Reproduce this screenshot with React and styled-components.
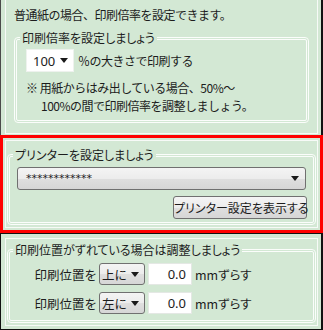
import React from "react";
import styled, { createGlobalStyle } from "styled-components";

const GlobalStyle = createGlobalStyle`
  html, body {
    margin: 0;
    padding: 0;
    background: #ffffff;
  }
`;

const green = "#d3e8d4";

const Arrow = () => (
  <svg width="8" height="5" viewBox="0 0 8 5">
    <polygon points="0,0 8,0 4,5" fill="#1a1a1a" />
  </svg>
);

const App = () => {
  return (
    <>
      <GlobalStyle />
      <StyledWindow>
        {/* Print scale */}
        <StyledTopSection>
          <StyledInner $pad="6px 8px 0 8px" $noTop>
            <StyledLine>普通紙の場合、印刷倍率を設定できます。</StyledLine>
            <StyledGroup $top="6px">
              <StyledLegend>印刷倍率を設定しましょう</StyledLegend>
              <StyledGroupBody $pad="3px 0 5px 9px">
                <StyledRow>
                  <StyledSelect $variant="flat" $width={48}>
                    <span>100</span>
                    <Arrow />
                  </StyledSelect>
                  <StyledText>％の大きさで印刷する</StyledText>
                </StyledRow>
                <StyledNote>
                  ※ 用紙からはみ出している場合、50%～
                  <br />
                  100%の間で印刷倍率を調整しましょう。
                </StyledNote>
              </StyledGroupBody>
            </StyledGroup>
          </StyledInner>
        </StyledTopSection>

        {/* Printer */}
        <StyledMidSection>
          <StyledInner $pad="6px 1px 0 1px">
            <StyledGroup>
              <StyledLegend>プリンターを設定しましょう</StyledLegend>
              <StyledGroupBody $pad="4px 6px 3px 7px">
                <StyledSelect $variant="raised" $width={289}>
                  <StyledMask>************</StyledMask>
                  <Arrow />
                </StyledSelect>
                <StyledButton>プリンター設定を表示する</StyledButton>
              </StyledGroupBody>
            </StyledGroup>
          </StyledInner>
        </StyledMidSection>

        {/* Offset */}
        <StyledBottomSection>
          <StyledInner $pad="3px 1px 0 1px">
            <StyledGroup>
              <StyledLegend>印刷位置がずれている場合は調整しましょう</StyledLegend>
              <StyledGroupBody $pad="5px 0 6px 0" $gap="7px">
                {["上に", "左に"].map((dir) => (
                  <StyledRow key={dir}>
                    <StyledLabel>印刷位置を</StyledLabel>
                    <StyledSelect $variant="raised" $width={46} $small>
                      <span>{dir}</span>
                      <Arrow />
                    </StyledSelect>
                    <StyledInput>0.0</StyledInput>
                    <StyledUnit>mmずらす</StyledUnit>
                  </StyledRow>
                ))}
              </StyledGroupBody>
            </StyledGroup>
          </StyledInner>
        </StyledBottomSection>
      </StyledWindow>
    </>
  );
};

export default App;

const StyledWindow = styled.div`
  width: 323px;
  height: 330px;
  display: flex;
  flex-direction: column;
  font-family: "Noto Sans CJK JP", "Noto Sans", sans-serif;
  font-size: 12px;
  color: #1c1c1c;
  background: ${green};
  white-space: nowrap;
`;

const StyledTopSection = styled.div`
  height: 135px;
  box-sizing: border-box;
  background: ${green};
  border-left: 1px solid #4a4a4a;
  border-right: 2px solid #111;
  padding: 0 3px 1px 4px;
`;

const StyledMidSection = styled.div`
  height: 98px;
  box-sizing: border-box;
  background: ${green};
  border: 3px solid #ff0000;
  padding: 2px;
`;

const StyledBottomSection = styled.div`
  height: 97px;
  box-sizing: border-box;
  background: ${green};
  border: 1px solid #111;
  border-right-width: 2px;
  padding: 4px 3px 3px 4px;
`;

const StyledInner = styled.div`
  height: 100%;
  box-sizing: border-box;
  border: 1px solid #f7faf7;
  border-top: ${({ $noTop }) => ($noTop ? "none" : "1px solid #f7faf7")};
  padding: ${({ $pad }) => $pad};
  display: flex;
  flex-direction: column;
`;

const StyledLine = styled.div`
  line-height: 18px;
  letter-spacing: -0.5px;
`;

const StyledGroup = styled.fieldset`
  margin: ${({ $top }) => $top || "0"} 0 0 0;
  padding: 0;
  min-width: 0;
  border: 3px double #fbfdfb;
  border-radius: 4px;
`;

const StyledLegend = styled.legend`
  margin-left: 3px;
  padding: 0 2px;
  line-height: 16px;
  font-feature-settings: "palt";
`;

const StyledGroupBody = styled.div`
  display: flex;
  flex-direction: column;
  gap: ${({ $gap }) => $gap || "0"};
  padding: ${({ $pad }) => $pad};
`;

const StyledRow = styled.div`
  display: flex;
  align-items: center;
`;

const StyledText = styled.span`
  letter-spacing: -0.5px;
`;

const StyledSelect = styled.div`
  width: ${({ $width }) => $width}px;
  height: ${({ $small }) => ($small ? 22 : 23)}px;
  box-sizing: border-box;
  display: flex;
  align-items: center;
  justify-content: space-between;
  margin-right: ${({ $variant }) => ($variant === "flat" ? "4px" : "0")};
  padding: ${({ $variant, $small }) =>
    $variant === "flat" ? "0 5px 0 6px" : $small ? "0 5px 0 2px" : "0 6px 0 8px"};
  background: ${({ $variant }) =>
    $variant === "flat"
      ? "#ffffff"
      : "linear-gradient(#f4f4f4, #ececec 50%, #dfdfdf 51%, #d6d6d6)"};
  border: 1px solid
    ${({ $variant }) => ($variant === "flat" ? "#eef2ee" : "#707070")};
  border-radius: ${({ $variant }) => ($variant === "flat" ? "0" : "3px")};
  font-family: ${({ $variant }) =>
    $variant === "flat" ? '"Noto Sans", sans-serif' : "inherit"};
  font-size: ${({ $variant, $small }) =>
    $variant === "flat" ? "13px" : $small ? "12.5px" : "12px"};
`;

const StyledMask = styled.span`
  font-family: "DejaVu Sans", sans-serif;
  font-size: 11px;
`;

const StyledButton = styled.button`
  align-self: flex-end;
  margin-top: 6px;
  width: 134px;
  height: 23px;
  padding: 0;
  font-family: inherit;
  font-feature-settings: "palt";
  font-size: 12px;
  white-space: nowrap;
  color: #1c1c1c;
  background: linear-gradient(#f4f4f4, #ececec 50%, #dfdfdf 51%, #d6d6d6);
  border: 1px solid #707070;
  border-radius: 3px;
`;

const StyledNote = styled.div`
  margin-top: 7px;
  line-height: 18px;
  letter-spacing: -0.5px;
  padding-left: 15px;
  text-indent: -15px;
`;

const StyledLabel = styled.span`
  width: 87px;
  margin-right: 2px;
  text-align: right;
  font-size: 12.5px;
`;

const StyledInput = styled.div`
  width: 44px;
  height: 22px;
  box-sizing: border-box;
  margin: 0 3px;
  padding-right: 5px;
  display: flex;
  align-items: center;
  justify-content: flex-end;
  background: #ffffff;
  border: 1px solid #e4e8e4;
  font-family: "Noto Sans", sans-serif;
  font-size: 13px;
`;

const StyledUnit = styled.span`
  font-size: 12.5px;
  font-feature-settings: "palt";
`;
